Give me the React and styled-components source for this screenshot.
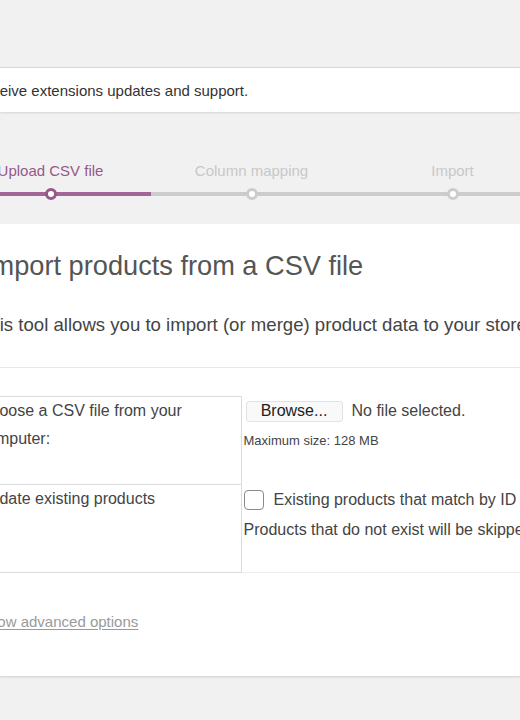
import React from "react";
import styled, { createGlobalStyle } from "styled-components";

const Global = createGlobalStyle`
  html, body {
    margin: 0;
    padding: 0;
    background: #f1f1f1;
    font-family: "Liberation Sans", Arial, sans-serif;
    color: #444;
  }
`;

const Viewport = styled.div`
  width: 520px;
  height: 720px;
  overflow: hidden;
  padding-top: 67px;
  box-sizing: border-box;
`;

const Notice = styled.div`
  background: #fff;
  border-top: 1px solid #d8d8d8;
  box-shadow: 0 1px 2px rgba(0, 0, 0, 0.12);
  height: 44px;
  display: flex;
  align-items: center;
  white-space: nowrap;
  font-size: 15px;
  color: #333;
`;

const NoticeText = styled.span`
  margin-left: -326px;
`;

const Steps = styled.ol`
  list-style: none;
  display: flex;
  margin: 50px 0 0 -50px;
  padding: 0;
`;

const Step = styled.li`
  flex: 0 0 201px;
  display: flex;
  flex-direction: column;
  align-items: center;
  gap: 13px;
  font-size: 15px;
  white-space: nowrap;
  color: ${(p) => (p.$active ? "#96588a" : "#c8c8c8")};
`;

const Track = styled.div`
  align-self: stretch;
  height: 4px;
  background: ${(p) => (p.$active ? "#a16696" : "#cccccc")};
  display: flex;
  align-items: center;
  justify-content: center;
`;

const Dot = styled.span`
  flex: 0 0 auto;
  width: 6px;
  height: 6px;
  border-radius: 50%;
  background: #fff;
  border: 3px solid ${(p) => (p.$active ? "#96588a" : "#cccccc")};
`;

const Card = styled.div`
  background: #fff;
  margin-top: 28px;
  box-shadow: 0 1px 2px rgba(0, 0, 0, 0.15);
  padding: 26px 0 43px;
`;

const Content = styled.div`
  margin-left: -21px;
  width: 900px;
`;

const Heading = styled.h2`
  margin: 0 0 0 5px;
  font-size: 27.2px;
  font-weight: 400;
  line-height: 32px;
  color: #555;
  white-space: nowrap;
`;

const Lead = styled.p`
  margin: 29px 0 0 -1px;
  font-size: 18.6px;
  line-height: 27px;
  color: #444;
  white-space: nowrap;
`;

const Rule = styled.hr`
  margin: 29px 0 0;
  border: 0;
  border-top: 1px solid #e8e8e8;
`;

const Table = styled.table`
  margin-top: 28px;
  border-collapse: collapse;
  table-layout: fixed;
  width: 900px;
`;

const Label = styled.th`
  width: 262px;
  box-sizing: border-box;
  padding: 0;
  height: 88px;
  vertical-align: top;
  text-align: left;
  font-weight: 400;
  font-size: 16px;
  line-height: 28px;
  color: #444;
  border: 1px solid #dcdcdc;
  border-left: 0;
  white-space: nowrap;
`;

const Field = styled.td`
  padding: 4px 0 0 2px;
  vertical-align: top;
  font-size: 16px;
  color: #444;
  white-space: nowrap;
  border-bottom: ${(p) => (p.$last ? "1px solid #eeeeee" : "0")};
`;

const FileRow = styled.div`
  display: flex;
  align-items: center;
  gap: 9px;
`;

const Browse = styled.button`
  margin-left: 2px;
  width: 97px;
  height: 21px;
  padding: 0;
  border: 1px solid #e2e2e2;
  border-radius: 3px;
  background: #f9f9f9;
  font-family: inherit;
  font-size: 16px;
  color: #222;
`;

const Hint = styled.div`
  margin-top: ${(p) => p.$gap}px;
  font-size: ${(p) => p.$size}px;
  color: #444;
`;

const CheckRow = styled.label`
  display: flex;
  align-items: center;
  gap: 10px;
  margin-top: 1px;
`;

const Box = styled.span`
  width: 18px;
  height: 18px;
  border: 1px solid #8a8a8a;
  border-radius: 4px;
  background: #fff;
`;

const Advanced = styled.a`
  display: block;
  margin-top: 38px;
  font-size: 15px;
  line-height: 22px;
  color: #9a9a9a;
  text-decoration: underline;
  text-underline-offset: 2px;
`;

const steps = ["Upload CSV file", "Column mapping", "Import", "Done!"];

export default function App() {
  return (
    <Viewport>
      <Global />
      <Notice>
        <NoticeText>
          Connect your store to WooCommerce.com to receive extensions updates and support.
        </NoticeText>
      </Notice>
      <Steps>
        {steps.map((s, i) => (
          <Step key={s} $active={i === 0}>
            {s}
            <Track $active={i === 0}>
              <Dot $active={i === 0} />
            </Track>
          </Step>
        ))}
      </Steps>
      <Card>
        <Content>
          <Heading>Import products from a CSV file</Heading>
          <Lead>
            This tool allows you to import (or merge) product data to your store from a CSV file.
          </Lead>
          <Rule />
          <Table>
            <tbody>
              <tr>
                <Label>
                  Choose a CSV file from your
                  <br />
                  computer:
                </Label>
                <Field>
                  <FileRow>
                    <Browse>Browse...</Browse>
                    No file selected.
                  </FileRow>
                  <Hint $gap={11} $size={13}>Maximum size: 128 MB</Hint>
                </Field>
              </tr>
              <tr>
                <Label>Update existing products</Label>
                <Field $last>
                  <CheckRow>
                    <Box />
                    Existing products that match by ID or SKU will be updated.
                  </CheckRow>
                  <Hint $gap={11} $size={16}>
                    Products that do not exist will be skipped.
                  </Hint>
                </Field>
              </tr>
            </tbody>
          </Table>
          <Advanced>Show advanced options</Advanced>
        </Content>
      </Card>
    </Viewport>
  );
}
